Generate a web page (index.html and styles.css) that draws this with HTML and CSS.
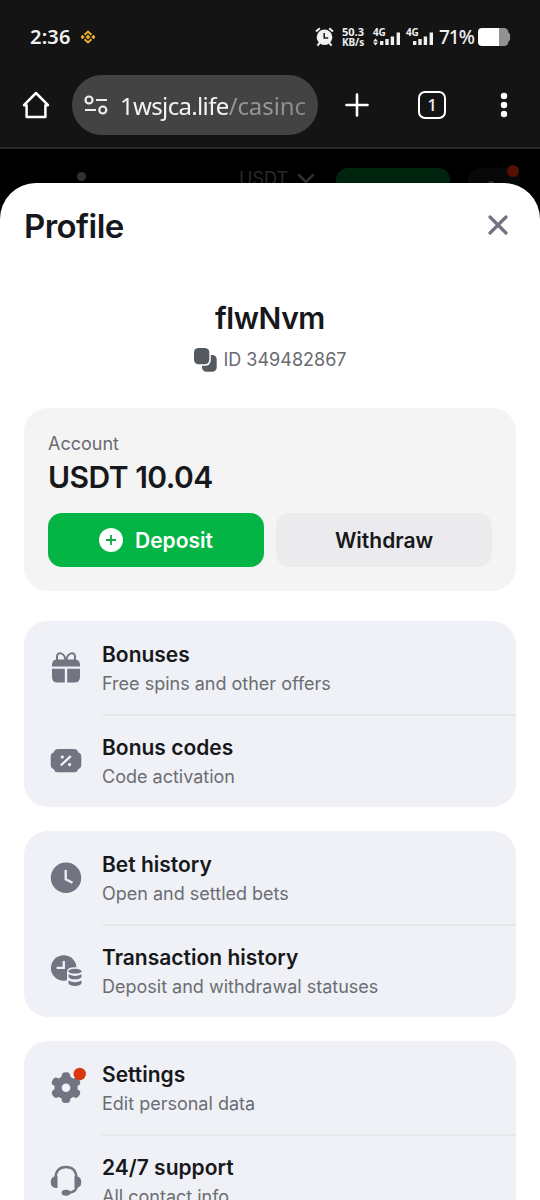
FILE: index.html
```html
<!DOCTYPE html>
<html lang="en">
<head>
<meta charset="utf-8">
<title>Profile</title>
<link rel="stylesheet" href="styles.css">
</head>
<body>
<div class="phone">
  <header class="chrome">
    <div class="status">
      <span class="time">2:36</span>
      <svg class="coin" width="14" height="14" viewBox="0 0 14 14" fill="none" stroke="#e9b02d" stroke-width="2"><path d="M3.6 4.8 7 1.6l3.4 3.2M3.6 9.2 7 12.4l3.4-3.2M.6 7l.9-.9.9.9-.9.9zM11.6 7l.9-.9.9.9-.9.9z"/><path d="M7 6 8 7 7 8 6 7z"/></svg>
      <div class="status-right">
        <svg class="alarm" width="19" height="20" viewBox="0 0 19 20"><circle cx="9.5" cy="10.3" r="7.8" fill="#f2f2f2"/><path d="M1 4.6 4.8 1.2M18 4.6l-3.8-3.4M4.6 16l-2.2 2.6M14.4 16l2.2 2.6" stroke="#f2f2f2" stroke-width="2" fill="none"/><path d="M9.2 6v5h4" stroke="#222" stroke-width="1.6" fill="none"/></svg>
        <span class="speed"><span>50.3</span><span>KB/s</span></span>
        <span class="signal"><span class="net">4G</span><svg width="28" height="19" viewBox="0 0 28 19" fill="#efefef"><path d="m0 14.400 2.500-3 2.500 3zM0 15.400h5l-2.500 3zM7 14h3.400v4H7zM12.300 12h3.400v6h-3.400zM17.700 9.500h3.400V18h-3.400zM23.600 5.500H27V18h-3.400z"/></svg></span>
        <span class="signal"><span class="net">4G</span><svg width="28" height="19" viewBox="0 0 28 19" fill="#efefef"><path d="M7 14h3.400v4H7zM12.300 12h3.400v6h-3.400zM17.700 9.500h3.400V18h-3.400zM23.600 5.500H27V18h-3.400z"/></svg></span>
        <span class="percent">71%</span>
        <svg width="32" height="18" viewBox="0 0 32 18"><path d="M21 0h5q4 0 4.500 4.500l1.500 1.500v6l-1.500 1.500Q30 18 26 18h-5z" fill="#929292"/><path d="M4 0h17v18H4q-4 0-4-4V4q0-4 4-4z" fill="#fff"/></svg>
      </div>
    </div>
    <div class="toolbar">
      <svg width="28" height="28" viewBox="0 0 28 28" fill="none" stroke="#fff" stroke-width="2.500" stroke-linejoin="round" stroke-linecap="round"><path d="M4.600 14.200H2L14 2l12 12.200h-2.600V26H4.600z"/></svg>
      <div class="address">
        <svg width="24" height="20" viewBox="0 0 24 20" fill="none" stroke="#eee" stroke-width="2.200"><circle cx="5" cy="5" r="3.500"/><path d="M12 5h11M1 15h11"/><circle cx="18.800" cy="15" r="3.500"/></svg>
        <span class="url">1wsjca.life<span class="path">/casinc</span></span>
      </div>
      <svg class="plus" width="24" height="24" viewBox="0 0 24 24" stroke="#fff" stroke-width="2.600" stroke-linecap="round"><path d="M12 1.500v21M1.500 12h21"/></svg>
      <span class="tab-count">1</span>
      <svg class="more" width="8" height="26" viewBox="0 0 8 26" fill="#fff"><circle cx="4" cy="4" r="3.200"/><circle cx="4" cy="13" r="3.200"/><circle cx="4" cy="22" r="3.200"/></svg>
    </div>
  </header>

  <div class="site-bar">
    <span class="brand-dot"></span>
    <span class="currency">USDT</span>
    <svg class="chevron" width="18" height="11" viewBox="0 0 18 11" fill="none" stroke="#303030" stroke-width="2.500" stroke-linecap="round"><path d="m2 2 7 7 7-7"/></svg>
    <span class="green-button"></span>
    <span class="avatar"><span class="avatar-head"></span><span class="avatar-dot"></span></span>
  </div>

  <main class="sheet">
    <div class="sheet-head">
      <h1>Profile</h1>
      <svg width="20" height="20" viewBox="0 0 20 20" stroke="#717480" stroke-width="3.200" stroke-linecap="round"><path d="m2 2 16 16M18 2 2 18"/></svg>
    </div>
    <div class="username">flwNvm</div>
    <div class="user-id">
      <svg width="24" height="25" viewBox="0 0 24 25"><rect x="9" y="8" width="14.700" height="16.700" rx="4.500" fill="#555a61"/><rect x=".2" y=".2" width="17.600" height="18.600" rx="5.500" fill="#fff"/><rect x="1" y="1" width="15.300" height="16.300" rx="4.500" fill="#555a61"/></svg>
      <span>ID 349482867</span>
    </div>

    <section class="account">
      <div class="label">Account</div>
      <div class="balance">USDT 10.04</div>
      <div class="actions">
        <div class="button deposit"><svg width="24" height="24" viewBox="0 0 24 24"><circle cx="12" cy="12" r="12" fill="#fff"/><path d="M12 7v10M7 12h10" stroke="#12a943" stroke-width="1.800"/></svg><span>Deposit</span></div>
        <div class="button withdraw"><span>Withdraw</span></div>
      </div>
    </section>

    <section class="group">
      <div class="row">
        <svg class="icon" viewBox="0 0 36 36"><g fill="none" stroke="#717582" stroke-width="2"><path d="M17.500 10C16.500 2 9 1.500 9 6.500V10M18.500 10C19.500 2 27 1.500 27 6.500V10"/></g><path fill="#717582" d="M4 16.500v-1.600q0-5.400 5.600-5.400h16.800q5.600 0 5.600 5.400v1.600zM4 18.800h12.800v13.800H9.600Q4 32.600 4 27zM19.200 18.800H32V27q0 5.600-5.600 5.600h-7.200z"/></svg>
        <div class="copy"><h2>Bonuses</h2><p>Free spins and other offers</p></div>
      </div>
      <div class="row">
        <svg class="icon" viewBox="0 0 36 36"><path fill="#717582" d="M9.500 6h17q2.700 0 3.500 2.500l.3.900q3 .9 3 4v8.500q0 3.100-3 4l-.3.900q-.8 2.500-3.500 2.500h-17Q6.800 29.300 6 26.800l-.3-.9q-3-.9-3-4v-8.500q0-3.100 3-4l.3-.9Q6.800 6 9.500 6z"/><path d="m13.500 21.800 8.700-8.200" stroke="#f2f4f8" stroke-width="2.200" stroke-linecap="round"/><circle cx="14.300" cy="14" r="1.600" fill="#f2f4f8"/><circle cx="21.600" cy="21.600" r="1.600" fill="#f2f4f8"/></svg>
        <div class="copy"><h2>Bonus codes</h2><p>Code activation</p></div>
      </div>
    </section>

    <section class="group">
      <div class="row">
        <svg class="icon" viewBox="0 0 36 36"><circle cx="18" cy="17.700" r="15.200" fill="#717582"/><path d="M17.700 10v9.200l6.800 3.600" fill="none" stroke="#eff1f6" stroke-width="2.300"/></svg>
        <div class="copy"><h2>Bet history</h2><p>Open and settled bets</p></div>
      </div>
      <div class="row">
        <svg class="icon" viewBox="0 0 36 36"><circle cx="15.700" cy="15" r="12.800" fill="#717582"/><path d="M15.800 8v6.800H8.600" fill="none" stroke="#eff1f6" stroke-width="2.300"/><path fill="#eff1f6" d="M19 18.500q0-4.300 8-4.300t8 4.300V35H19z"/><g fill="#717582"><ellipse cx="27" cy="18.200" rx="6.500" ry="2.400"/><path d="M20.500 21.300q6.500 3.400 13 0v2.700q-1.300 2.300-6.500 2.300t-6.500-2.300zM20.500 27.500q6.500 3.400 13 0v3q-1.300 2.400-6.500 2.400t-6.500-2.400z"/></g></svg>
        <div class="copy"><h2>Transaction history</h2><p>Deposit and withdrawal statuses</p></div>
      </div>
    </section>

    <section class="group">
      <div class="row">
        <svg class="icon" viewBox="0 0 36 36"><g fill="#717582"><circle cx="18" cy="17.700" r="11.600"/><rect x="13.700" y="2.300" width="8.600" height="30.800" rx="3.800"/><rect x="13.700" y="2.300" width="8.600" height="30.800" rx="3.800" transform="rotate(60 18 17.700)"/><rect x="13.700" y="2.300" width="8.600" height="30.800" rx="3.800" transform="rotate(120 18 17.700)"/></g><circle cx="18" cy="17.700" r="4.300" fill="#eff1f6"/><circle cx="31.700" cy="4" r="6.200" fill="#d9380f"/></svg>
        <div class="copy"><h2>Settings</h2><p>Edit personal data</p></div>
      </div>
      <div class="row">
        <svg class="icon" viewBox="0 0 36 36"><path d="M7.500 15.500C7.500 8 11.500 4 18 4s10.500 4 10.500 11.500M28.700 23c0 4-3 6.300-8.500 6.800" fill="none" stroke="#717582" stroke-width="2.400"/><path fill="#717582" d="M9.500 13v12q-6.800.2-6.800-6t6.800-6zM26.500 13v12q6.800.2 6.800-6t-6.800-6z"/><ellipse cx="18" cy="29.700" rx="4.400" ry="3" fill="#717582"/></svg>
        <div class="copy"><h2>24/7 support</h2><p>All contact info</p></div>
      </div>
    </section>
  </main>
</div>
</body>
</html>
```
FILE: styles.css
```css
* { box-sizing: border-box; }
body { margin: 0; background: #000; font-family: Inter, "Liberation Sans", sans-serif; }
h1, h2, p { margin: 0; }
svg { display: block; flex: none; }
.phone { width: 540px; height: 1200px; overflow: hidden; display: flex; flex-direction: column; white-space: nowrap; }

.chrome { flex: none; height: 149px; background: #141414; border-bottom: 2px solid #292929; font-family: "Noto Sans", sans-serif; color: #f0f0f0; }
.status { height: 75px; display: flex; align-items: center; padding: 0 30px 2px; }
.time { font-size: 20px; font-weight: 600; letter-spacing: .2px; line-height: 24px; width: 51px; }
.status-right { margin-left: auto; display: flex; align-items: center; height: 24px; }
.alarm { margin-right: 8px; }
.speed { display: flex; flex-direction: column; width: 31px; font-size: 11px; font-weight: 700; line-height: 11px; letter-spacing: 0; }
.speed span:last-child { font-size: 10px; letter-spacing: -.1px; }
.signal { display: grid; width: 33px; height: 20px; }
.signal svg { grid-area: 1 / 1; }
.net { grid-area: 1 / 1; font-size: 10px; line-height: 10px; font-weight: 700; letter-spacing: -.3px; }
.percent { font-size: 19px; line-height: 22px; font-weight: 500; letter-spacing: -1px; width: 39px; }

.toolbar { height: 60px; display: flex; align-items: center; padding: 0 32px 0 22px; }
.address { width: 246px; height: 60px; border-radius: 30px; background: #434343; margin-left: 22px; padding: 0 12px; display: flex; align-items: center; gap: 12px; }
.url { width: 187px; overflow: hidden; font-size: 24px; line-height: 34px; padding-top: 1px; letter-spacing: -.66px; color: #f4f4f4; -webkit-mask-image: linear-gradient(90deg, #000 80%, rgba(0,0,0,.8)); }
.path { color: #969696; letter-spacing: -.1px; }
.plus { margin-left: 27px; }
.tab-count { width: 28px; height: 28px; margin-left: 49px; border: 2.500px solid #fff; border-radius: 7px; display: flex; align-items: center; justify-content: center; font-size: 17px; line-height: 20px; font-weight: 500; }
.more { margin-left: 54px; }

.site-bar { flex: none; height: 34px; display: flex; align-items: flex-start; background: #000; }
.brand-dot { width: 9px; height: 9px; border-radius: 50%; background: #303030; margin: 23px 0 0 77px; }
.currency { width: 57px; margin: 18px 0 0 153px; font-size: 18px; line-height: 24px; color: #292929; }
.chevron { margin: 24px 0 0 1px; }
.green-button { width: 114px; height: 36px; margin: 19px 0 0 21px; border-radius: 12px; background: #00250f; }
.avatar { width: 52px; height: 36px; margin: 19px 0 0 18px; border-radius: 12px; background: #080808; display: flex; }
.avatar-head { width: 6px; height: 6px; border-radius: 50%; background: #303030; margin: 13px 0 0 20px; }
.avatar-dot { width: 12px; height: 12px; border-radius: 50%; background: #541003; margin: -3px 1px 0 auto; }

.sheet { flex: 1; min-height: 0; background: #fff; border-radius: 36px 36px 0 0; padding: 0 24px; color: #17181b; }
.sheet-head { height: 86px; display: flex; align-items: center; justify-content: space-between; padding-right: 8px; }
h1 { font-size: 33px; line-height: 40px; font-weight: 600; letter-spacing: -.55px; }
.sheet-head svg { margin-top: -2px; }
.username { margin-top: 31px; text-align: center; font-size: 30px; line-height: 36px; font-weight: 600; letter-spacing: -.4px; }
.user-id { height: 26px; margin-top: 10px; display: flex; justify-content: center; align-items: center; gap: 6px; font-size: 18px; color: #686a70; }

.account { margin-top: 36px; height: 183px; border-radius: 24px; background: #f4f4f4; padding: 24px; }
.label { font-size: 18px; line-height: 24px; color: #686a70; }
.balance { font-size: 30px; line-height: 36px; font-weight: 600; margin-top: 3px; letter-spacing: -.5px; }
.actions { display: flex; gap: 12px; margin-top: 18px; }
.button { flex: 1; height: 54px; border-radius: 14px; display: flex; align-items: center; justify-content: center; gap: 12px; font-size: 21px; font-weight: 600; }
.deposit { background: #04b444; color: #fff; }
.withdraw { background: #ebebed; }

.group { margin-top: 24px; height: 186px; border-radius: 24px; background: #eff1f6; }
.account + .group { margin-top: 30px; }
.row { height: 93px; display: flex; padding-left: 24px; }
.icon { width: 36px; height: 36px; margin-top: 29px; overflow: visible; }
.copy { flex: 1; margin-left: 18px; padding-top: 20px; }
.row:first-child .copy { border-bottom: 2px solid #e6e8ec; height: 95px; }
h2 { font-size: 21px; line-height: 28px; font-weight: 600; }
p { font-size: 18px; line-height: 24px; margin-top: 3px; color: #6b6d73; }
```
